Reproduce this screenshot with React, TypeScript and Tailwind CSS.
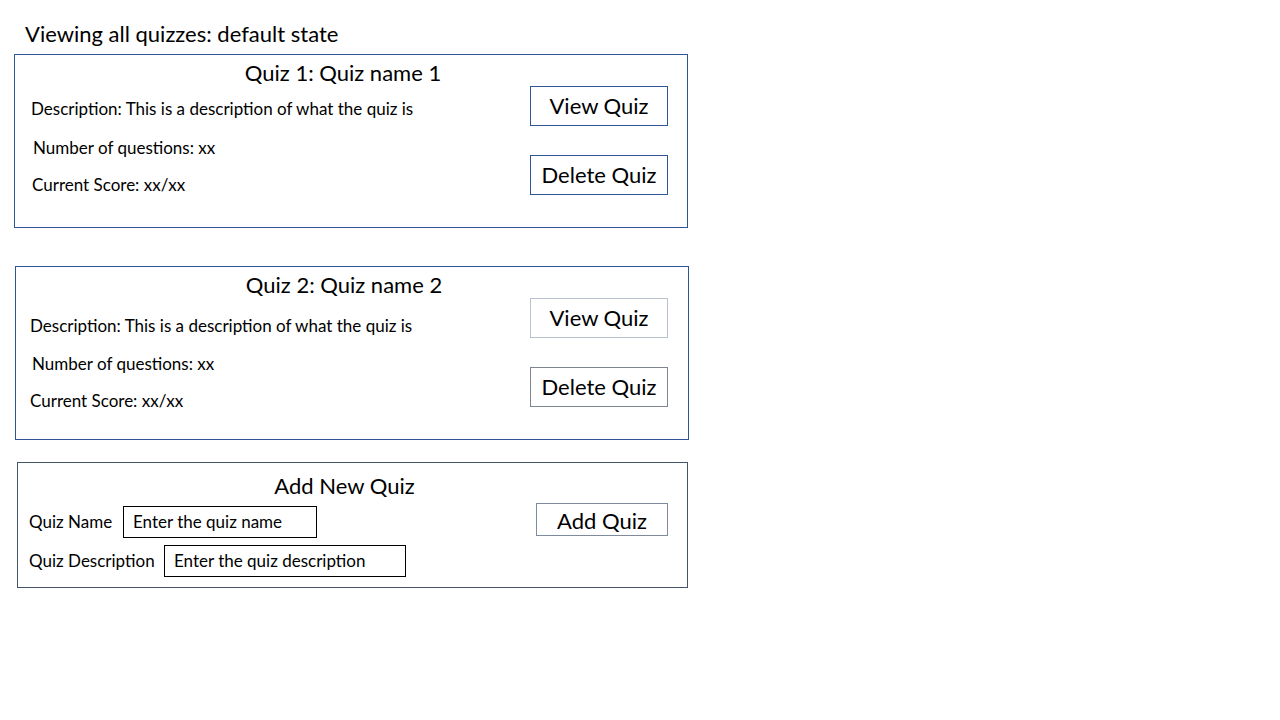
const font = { fontFamily: "Lato, 'Open Sans', sans-serif" };

const QuizCard = ({
  title,
  lines,
  viewBorder,
  deleteBorder,
  className,
  btnRight,
}: {
  title: string;
  lines: { text: string; cls: string }[];
  viewBorder: string;
  deleteBorder: string;
  className: string;
  btnRight: string;
}) => {
  return (
    <div className={`border border-[#2f5597] h-[174px] w-[674px] ${className}`}>
      {/* Title */}
      <div className="pt-[6px] pr-[16px] text-center text-[22px] leading-[24px] text-black">
        {title}
      </div>

      <div className="flex">
        {/* Details */}
        <div className="flex-1 flex flex-col text-[17px] leading-[20px] text-black">
          {lines.map((l, i) => (
            <p key={i} className={l.cls}>
              {l.text}
            </p>
          ))}
        </div>

        {/* Buttons */}
        <div className={`mt-[1px] flex flex-col gap-[29px] ${btnRight}`}>
          <button className={`h-[40px] w-[138px] border bg-white pb-[2px] text-[22px] text-black ${viewBorder}`}>
            View Quiz
          </button>
          <button className={`h-[40px] w-[138px] border bg-white pb-[2px] text-[22px] text-black ${deleteBorder}`}>
            Delete Quiz
          </button>
        </div>
      </div>
    </div>
  );
};

export default function App() {
  return (
    <div className="w-[1280px] h-[720px] bg-white overflow-hidden" style={font}>
      <h1 className="pt-[21px] pl-[25px] text-[22px] leading-[26px] text-black">
        Viewing all quizzes: default state
      </h1>

      <QuizCard
        className="ml-[14px] mt-[7px]"
        title="Quiz 1: Quiz name 1"
        viewBorder="border-[#2f5597]"
        deleteBorder="border-[#2f5597]"
        btnRight="mr-[19px]"
        lines={[
          { text: "Description: This is a description of what the quiz is", cls: "mt-[14px] ml-[16px]" },
          { text: "Number of questions: xx", cls: "mt-[19px] ml-[18px]" },
          { text: "Current Score: xx/xx", cls: "mt-[17px] ml-[17px]" },
        ]}
      />

      <QuizCard
        className="ml-[15px] mt-[38px]"
        title="Quiz 2: Quiz name 2"
        viewBorder="border-[#b8c2d0]"
        deleteBorder="border-[#7f8590]"
        btnRight="mr-[20px]"
        lines={[
          { text: "Description: This is a description of what the quiz is", cls: "mt-[19px] ml-[14px]" },
          { text: "Number of questions: xx", cls: "mt-[18px] ml-[16px]" },
          { text: "Current Score: xx/xx", cls: "mt-[17px] ml-[14px]" },
        ]}
      />

      {/* Add new quiz */}
      <div className="ml-[17px] mt-[22px] h-[126px] w-[671px] border border-[#44546a]">
        <div className="pt-[11px] pr-[16px] text-center text-[22px] leading-[24px] text-black">
          Add New Quiz
        </div>
        <div className="flex">
          <div className="flex-1 flex flex-col pl-[11px] text-[17px] text-black">
            <div className="mt-[8px] flex items-center">
              <span className="w-[94px]">Quiz Name</span>
              <div className="h-[32px] w-[194px] border border-black pl-[9px] flex items-center">
                Enter the quiz name
              </div>
            </div>
            <div className="mt-[7px] flex items-center">
              <span className="w-[135px]">Quiz Description</span>
              <div className="h-[32px] w-[242px] border border-black pl-[9px] flex items-center">
                Enter the quiz description
              </div>
            </div>
          </div>
          <div className="mr-[19px] mt-[5px]">
            <button className="h-[33px] w-[132px] border border-[#7f8a9c] bg-white pb-[2px] text-[22px] text-black">
              Add Quiz
            </button>
          </div>
        </div>
      </div>
    </div>
  );
}
